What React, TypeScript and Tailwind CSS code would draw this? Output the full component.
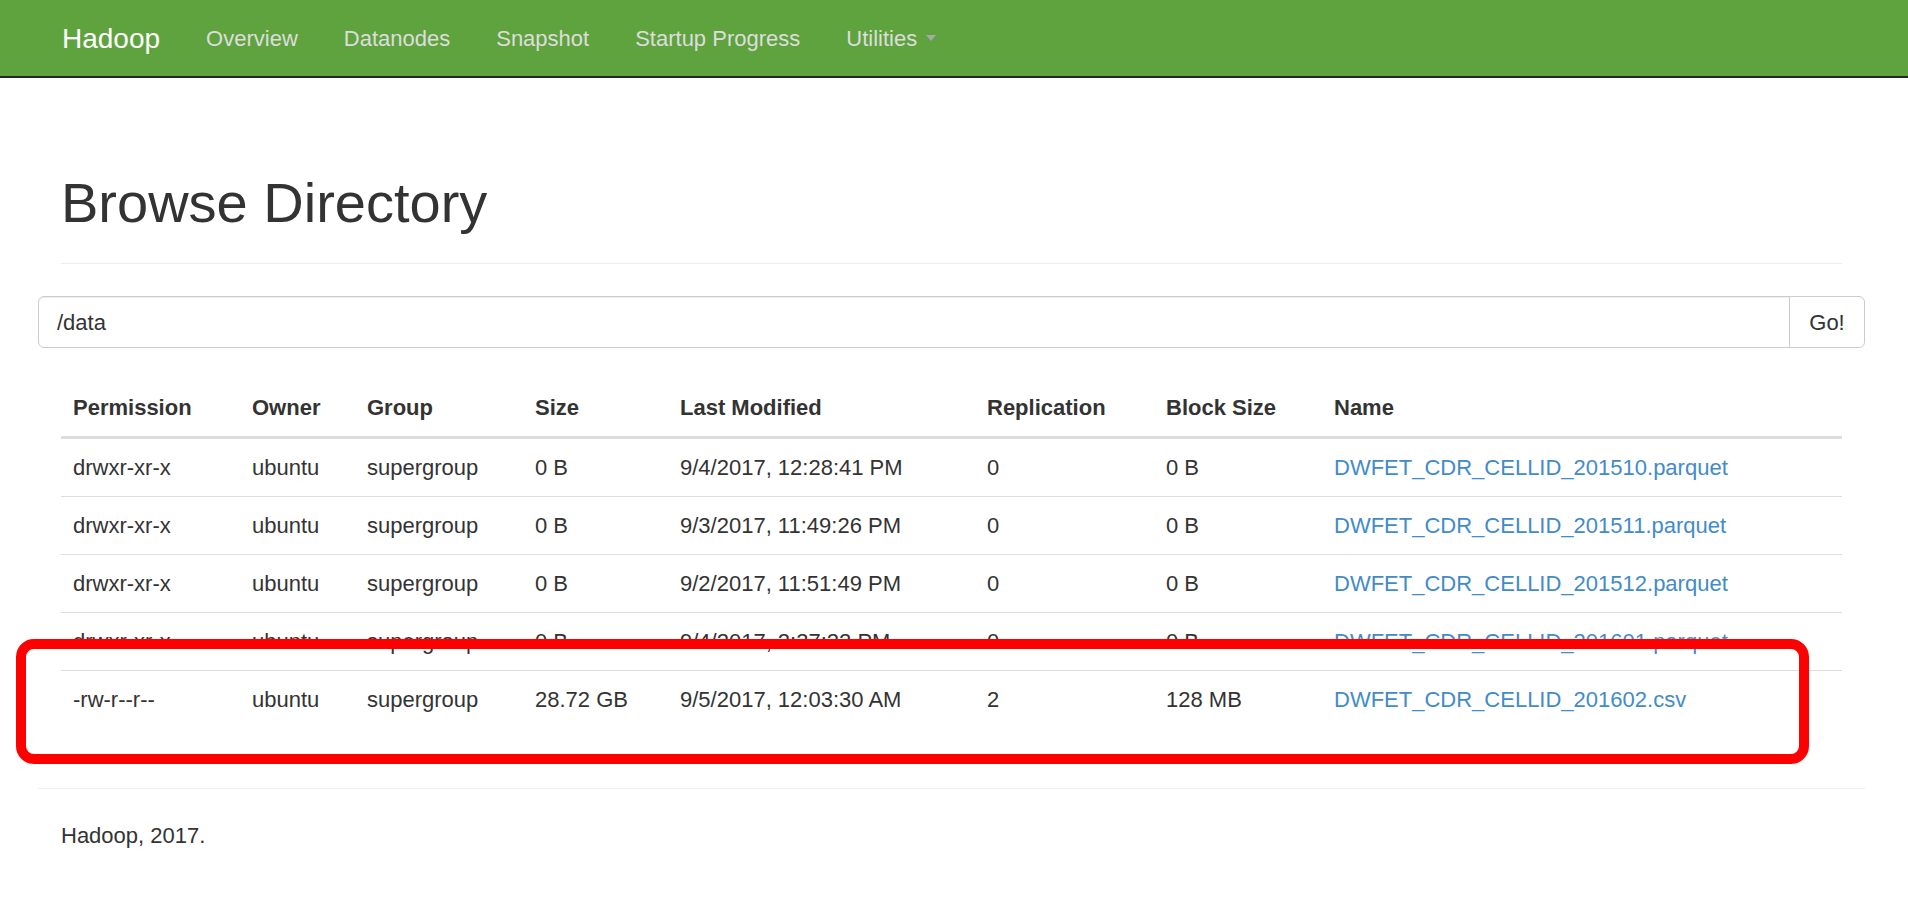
import React from "react";

interface FileRow {
  permission: string;
  owner: string;
  group: string;
  size: string;
  modified: string;
  replication: string;
  blockSize: string;
  name: string;
}

const NAV_LINKS = ["Overview", "Datanodes", "Snapshot", "Startup Progress"];

const FILES: FileRow[] = [
  { permission: "drwxr-xr-x", owner: "ubuntu", group: "supergroup", size: "0 B", modified: "9/4/2017, 12:28:41 PM", replication: "0", blockSize: "0 B", name: "DWFET_CDR_CELLID_201510.parquet" },
  { permission: "drwxr-xr-x", owner: "ubuntu", group: "supergroup", size: "0 B", modified: "9/3/2017, 11:49:26 PM", replication: "0", blockSize: "0 B", name: "DWFET_CDR_CELLID_201511.parquet" },
  { permission: "drwxr-xr-x", owner: "ubuntu", group: "supergroup", size: "0 B", modified: "9/2/2017, 11:51:49 PM", replication: "0", blockSize: "0 B", name: "DWFET_CDR_CELLID_201512.parquet" },
  { permission: "drwxr-xr-x", owner: "ubuntu", group: "supergroup", size: "0 B", modified: "9/4/2017, 2:37:22 PM", replication: "0", blockSize: "0 B", name: "DWFET_CDR_CELLID_201601.parquet" },
  { permission: "-rw-r--r--", owner: "ubuntu", group: "supergroup", size: "28.72 GB", modified: "9/5/2017, 12:03:30 AM", replication: "2", blockSize: "128 MB", name: "DWFET_CDR_CELLID_201602.csv" },
];

const HEADERS = ["Permission", "Owner", "Group", "Size", "Last Modified", "Replication", "Block Size", "Name"];

export default function App() {
  return (
    <div className="relative min-h-[913px] w-full bg-white font-['Liberation_Sans',Arial,sans-serif] text-[#333]">
      {/* Navbar */}
      <nav className="flex h-[78px] items-center border-b-2 border-[#262626] bg-[#5fa33e] pl-[62px]">
        <span className="pr-[23px] text-[28px] leading-[31px] text-white">Hadoop</span>
        {NAV_LINKS.map((label) => (
          <span key={label} className="px-[23px] text-[22px] leading-[31px] text-[#ddd]">
            {label}
          </span>
        ))}
        <span className="flex items-center px-[23px] text-[22px] leading-[31px] text-[#ddd]">
          Utilities
          <span className="ml-[9px] inline-block h-0 w-0 border-x-[5px] border-t-[6px] border-x-transparent border-t-[#a8a8a8]" />
        </span>
      </nav>

      <div className="pl-[38px] pr-[43px]">
        {/* Page header */}
        <div className="mx-[23px] mt-[94px] border-b border-[#eee] pb-[29px]">
          <h1 className="text-[56px] font-normal leading-[62px]">Browse Directory</h1>
        </div>

        {/* Path input */}
        <div className="mt-[32px] flex h-[52px] rounded-[6px] border border-[#ccc] shadow-[inset_0_1px_1px_rgba(0,0,0,0.075)]">
          <div className="flex flex-1 items-center pl-[18px] text-[22px]">/data</div>
          <button className="w-[75px] rounded-r-[6px] border-l border-[#ccc] bg-white text-[22px] text-[#333]">
            Go!
          </button>
        </div>

        {/* Listing */}
        <div className="mx-[23px] mt-[31px]">
          <table className="w-full table-fixed text-left text-[22px] leading-[31px]">
            <colgroup>
              <col className="w-[179px]" />
              <col className="w-[115px]" />
              <col className="w-[168px]" />
              <col className="w-[145px]" />
              <col className="w-[307px]" />
              <col className="w-[179px]" />
              <col className="w-[168px]" />
              <col />
            </colgroup>
            <thead>
              <tr className="border-b-[3px] border-[#ddd]">
                {HEADERS.map((h) => (
                  <th key={h} className="px-[12px] py-[13px] font-bold">
                    {h}
                  </th>
                ))}
              </tr>
            </thead>
            <tbody>
              {FILES.map((f, i) => (
                <tr key={f.name} className={i === 0 ? "" : "border-t border-[#ddd]"}>
                  <td className="px-[12px] py-[13px]">{f.permission}</td>
                  <td className="px-[12px] py-[13px]">{f.owner}</td>
                  <td className="px-[12px] py-[13px]">{f.group}</td>
                  <td className="px-[12px] py-[13px]">{f.size}</td>
                  <td className="px-[12px] py-[13px]">{f.modified}</td>
                  <td className="px-[12px] py-[13px]">{f.replication}</td>
                  <td className="px-[12px] py-[13px]">{f.blockSize}</td>
                  <td className="px-[12px] py-[13px] text-[#428bca]">{f.name}</td>
                </tr>
              ))}
            </tbody>
          </table>
        </div>

        {/* Footer */}
        <div className="mt-[60px] border-t border-[#eee] pt-[31px]">
          <p className="px-[23px] text-[22px] leading-[31px]">Hadoop, 2017.</p>
        </div>
      </div>

      {/* Highlight annotation */}
      <div className="absolute left-[16px] top-[639px] h-[125px] w-[1793px] rounded-[18px] border-[10px] border-[#ff0000]" />
    </div>
  );
}
